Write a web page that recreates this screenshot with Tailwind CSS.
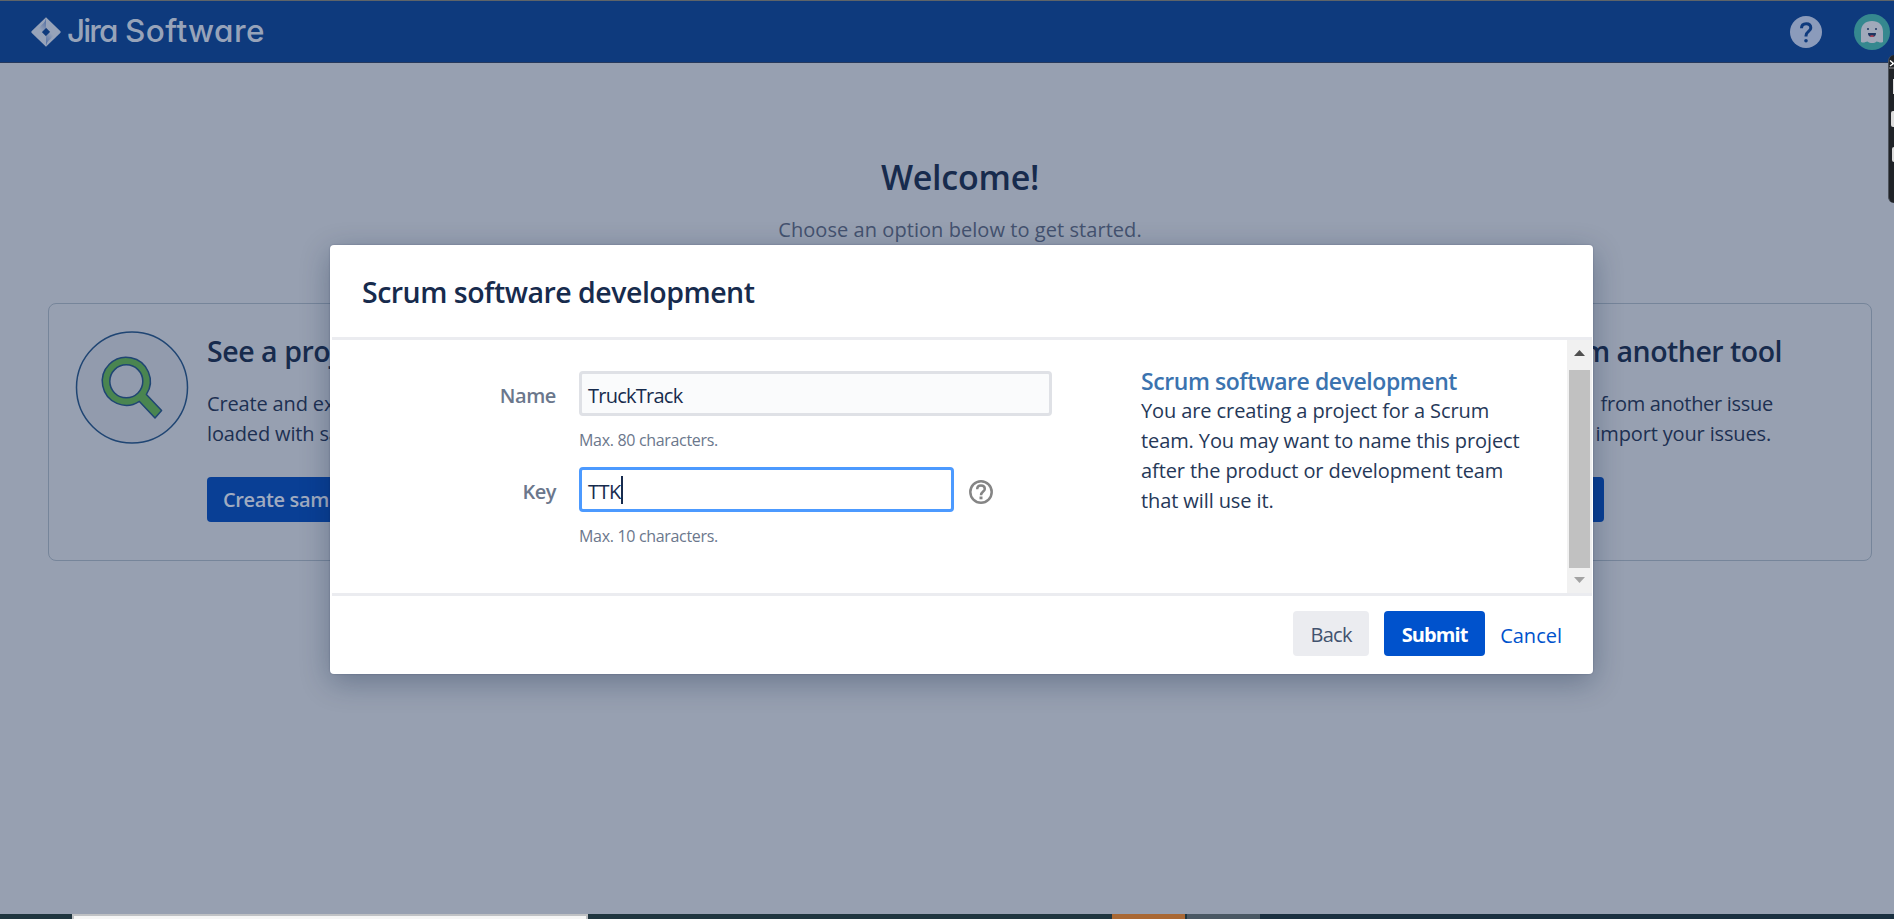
<!DOCTYPE html>
<html lang="en">
<head>
<meta charset="utf-8">
<title>Jira Software</title>
<script src="https://cdn.jsdelivr.net/npm/@tailwindcss/browser@4"></script>
</head>
<body class="h-screen overflow-hidden font-['Open_Sans','Noto_Sans',sans-serif] text-[20px] leading-[30px] text-[#172b4d] bg-[#97a0b1]">
<div class="relative flex h-screen flex-col overflow-hidden whitespace-nowrap">

  <header class="flex h-[63px] shrink-0 items-center border-t border-b border-t-[#5f6468] border-b-[#26395c] bg-[#0e3a7d] pl-[31px] pr-1">
    <svg class="h-[30px] w-[30px]" viewBox="0 0 30 30">
      <defs>
        <linearGradient id="ga" x1="15" y1="5" x2="8" y2="12" gradientUnits="userSpaceOnUse"><stop offset="0" stop-color="#5b75a6"/><stop offset="1" stop-color="#97a3b9"/></linearGradient>
        <linearGradient id="gb" x1="15" y1="25" x2="22" y2="18" gradientUnits="userSpaceOnUse"><stop offset="0" stop-color="#5b75a6"/><stop offset="1" stop-color="#97a3b9"/></linearGradient>
      </defs>
      <path fill="#97a3b9" fill-rule="evenodd" d="M15 .3 29.200 14Q30.200 15 29.200 16L15 29.700 .8 16Q-.2 15 .8 14ZM15 10.800 10.800 15 15 19.200 19.200 15Z"/>
      <path fill="url(#ga)" d="M15 .8V10.8L10.8 15 7.500 11.700 10.500 8Q14.500 5 15 .8Z"/>
      <path fill="url(#gb)" d="M15 29.200V19.200L19.200 15 22.500 18.300 19.500 22Q15.500 25 15 29.200Z"/>
    </svg>
    <div class="ml-[6px] flex font-['Inter',sans-serif] text-[31.500px] font-medium leading-[38px] text-[#97a3b9] [font-feature-settings:'cv11']"><span class="w-[58px] pb-[2px] tracking-[-1.9px]">Jira</span><span class="pb-[2px] tracking-[0.4px]">Software</span></div>
    <svg class="ml-auto h-8 w-8" viewBox="0 0 32 32">
      <circle cx="16" cy="16" r="16" fill="#8b9bbb"/>
      <path d="M11.500 12.200C11.500 9 13.500 7.700 16.200 7.700S20.800 9.300 20.800 12C20.800 15.500 16 15.500 16 19.800V20.500" fill="none" stroke="#0e3a7d" stroke-width="3"/>
      <circle cx="16" cy="24.800" r="1.800" fill="#0e3a7d"/>
    </svg>
    <svg class="ml-8 h-9 w-9" viewBox="0 0 36 36">
      <circle cx="18" cy="18" r="18" fill="#35888f"/>
      <path d="M7 28V17.500C7 11 11.500 7 18 7S29 11 29 17.500V28C26 29.500 24.500 27.500 22.500 27.500 20.500 29.500 16 29.500 13.500 27.500 11.500 27.500 10 29.500 7 28Z" fill="#a0a9ba"/>
      <circle cx="14" cy="15" r="1" fill="#1c3560"/><circle cx="22" cy="15" r="1" fill="#1c3560"/>
      <path d="M14 19H22Q22 23 18 23T14 19Z" fill="#1c3560"/>
      <path d="M15.500 22Q18 20.500 20.500 22 18 23.800 15.500 22Z" fill="#bb4050"/>
    </svg>
  </header>

  <main class="flex-1 pl-[48px] pr-[22px] pt-[89px]">
    <h1 class="text-center text-[34px] font-semibold leading-[50px] tracking-[-0.25px]">Welcome!</h1>
    <p class="mt-[13px] text-center tracking-[0.06px] text-[#44526f]">Choose an option below to get started.</p>
    <section class="mt-[58px] flex h-[258px] justify-between rounded-lg border border-[#76859a] pl-[26px] pr-[89px] pt-[27px]">
      <div class="flex">
        <svg class="h-[114px] w-[114px]" viewBox="0 0 114 114">
          <circle cx="57" cy="56.500" r="55.500" fill="#929bad" stroke="#1f4573" stroke-width="1.500"/>
          <path d="M71.400 63.400 86.600 79.500 80 87 64.400 70.400A24 24 0 1 1 71.400 63.400ZM51.300 33.800A16.500 16.500 0 1 0 51.300 66.800 16.500 16.500 0 1 0 51.300 33.800Z" fill="#4a8550" fill-rule="evenodd" stroke="#1f4573" stroke-width="1.500" stroke-linejoin="round"/>
        </svg>
        <div class="ml-[18px] pt-[5px]">
          <h2 class="text-[28.500px] font-semibold leading-[30px] tracking-[-0.45px]">See a project in action</h2>
          <p class="mt-[23px] tracking-[-0.15px] text-[#1d3052]">Create and explore a project<br>loaded with sample data.</p>
          <button class="mt-[28px] h-[45px] rounded bg-[#093f95] px-4 pt-px font-semibold tracking-[-0.35px] text-[#a0abc0]">Create sample project</button>
        </div>
      </div>
      <div class="w-[301px] pt-[5px]">
        <h2 class="text-right text-[28.500px] font-semibold leading-[30px] tracking-[-0.51px]">from another tool</h2>
        <div class="mt-[23px] flex flex-col text-right text-[#1d3052]">
          <span class="pr-[9px] tracking-[-0.29px]">from another issue</span>
          <span class="pr-[11px] tracking-[-0.15px]">import your issues.</span>
        </div>
        <div class="mt-[28px] h-[45px] w-[123px] rounded bg-[#093f95]"></div>
      </div>
    </section>
  </main>

  <footer class="flex h-[5px] shrink-0 bg-[#1f353f]">
    <div class="ml-[72px] w-[516px] border-x-2 border-t-2 border-[#bfc1c4] bg-[#f5f5f5]"></div>
    <div class="ml-[524px] w-[73px] bg-[#a96834]"></div>
    <div class="ml-[2px] w-[73px] bg-[#4a5864]"></div>
    <div class="flex-1 bg-[#1a3040]"></div>
  </footer>

  <!-- Docked side widget, mostly off screen -->
  <div class="absolute right-0 top-[55px] flex h-[148px] w-[6px] flex-col items-end rounded-l-md border-l border-[#4c525b] bg-[#202328] pt-[4px]">
    <svg class="h-[10px] w-[5px] shrink-0" viewBox="0 0 5 10"><path d="M1 1.500 4.500 4.500 1 7M3 4.500H5" fill="none" stroke="#fff" stroke-width="1.500"/><path d="M0 9H5" stroke="#999"/></svg>
    <div class="mt-[10px] h-[15px] w-px shrink-0 bg-[#e0e0e0]"></div>
    <div class="mt-[17px] h-[16px] w-[3px] shrink-0 rounded-l-xs bg-[#dcdcdc]"></div>
    <div class="mt-[20px] h-[15px] w-[2px] shrink-0 rounded-l-xs bg-[#dcdcdc]"></div>
  </div>

  <!-- Create project dialog -->
  <div role="dialog" class="absolute left-[330px] top-[245px] flex h-[429px] w-[1263px] flex-col rounded-[4px] bg-white pl-[2px] pr-px shadow-[0_0_1px_1px_rgba(9,30,66,0.08),0_8px_30px_rgba(9,30,66,0.32)]">
    <h2 class="flex h-[95px] shrink-0 items-center border-b-[3px] border-[#ebecf0] pl-[30px] pt-[2px] text-[28.500px] font-semibold tracking-[-0.5px]">Scrum software development</h2>
    <div class="flex h-[253px] shrink-0">
      <form class="flex w-[809px] flex-col pt-[31px]">
        <div class="flex h-[45px] items-center">
          <label class="w-[224px] pt-[4px] text-right font-semibold tracking-[-0.4px] text-[#6b778c]">Name</label>
          <div class="ml-[23px] flex h-[45px] w-[473px] items-center rounded-[4px] border-[3px] border-[#dfe1e6] bg-[#fafbfc] pl-[6px] pt-[4px] tracking-[-0.75px]">TruckTrack</div>
        </div>
        <p class="ml-[247px] mt-[9px] text-[16px] tracking-[-0.32px] text-[#6b778c]">Max. 80 characters.</p>
        <div class="mt-[12px] flex h-[45px] items-center">
          <label class="w-[224px] pt-[4px] text-right font-semibold tracking-[-0.5px] text-[#6b778c]">Key</label>
          <div class="ml-[23px] flex h-[45px] w-[375px] items-center rounded-[4px] border-[3px] border-[#4c9aff] bg-white pl-[6px]"><span class="pt-[4px] tracking-[-0.5px]">TTK</span><span class="h-[28px] w-[2px] bg-[#172b4d]"></span></div>
          <svg class="ml-[15px] mt-[4px] h-6 w-6" viewBox="0 0 24 24" fill="none" stroke="#858585">
            <circle cx="12" cy="12" r="10.700" stroke-width="2.500"/>
            <path d="M8.200 9.300C8.200 6.700 9.800 5.600 12 5.600S15.800 7 15.800 9C15.800 11.500 12 11.800 12 15.200" stroke-width="2.500"/>
            <path d="M10.500 17.900H13.500" stroke-width="2.800"/>
          </svg>
        </div>
        <p class="ml-[247px] mt-[9px] text-[16px] tracking-[-0.32px] text-[#6b778c]">Max. 10 characters.</p>
      </form>
      <div class="pt-[26px]">
        <h3 class="text-[23px] font-semibold leading-[30px] tracking-[-0.43px] text-[#3b73af]">Scrum software development</h3>
        <p class="tracking-[-0.1px] text-[#253858]">You are creating a project for a Scrum<br>team. You may want to name this project<br>after the product or development team<br>that will use it.</p>
      </div>
      <div class="ml-auto flex w-[25px] flex-col items-center bg-[#f1f1f1]">
        <svg class="h-[30px] w-[11px]" viewBox="0 0 11 30"><path d="M0 16 5.500 10 11 16Z" fill="#505050"/></svg>
        <div class="h-[198px] w-[21px] bg-[#c1c1c1]"></div>
        <svg class="h-[25px] w-[11px]" viewBox="0 0 11 25"><path d="M0 9 5.500 15 11 9Z" fill="#a3a3a3"/></svg>
      </div>
    </div>
    <div class="flex flex-1 items-start border-t-[3px] border-[#ebecf0] pr-[30px] pt-[15px]">
      <button class="ml-auto h-[45px] w-[76px] rounded-[4px] bg-[#ebecf0] pt-[3px] tracking-[-0.7px] text-[#42526e]">Back</button>
      <button class="ml-[15px] h-[45px] w-[101px] rounded-[4px] bg-[#0052cc] pt-[3px] font-bold tracking-[-0.87px] text-white">Submit</button>
      <a class="ml-[15px] h-[45px] pt-[10px] text-[#0052cc]">Cancel</a>
    </div>
  </div>
</div>
</body>
</html>
